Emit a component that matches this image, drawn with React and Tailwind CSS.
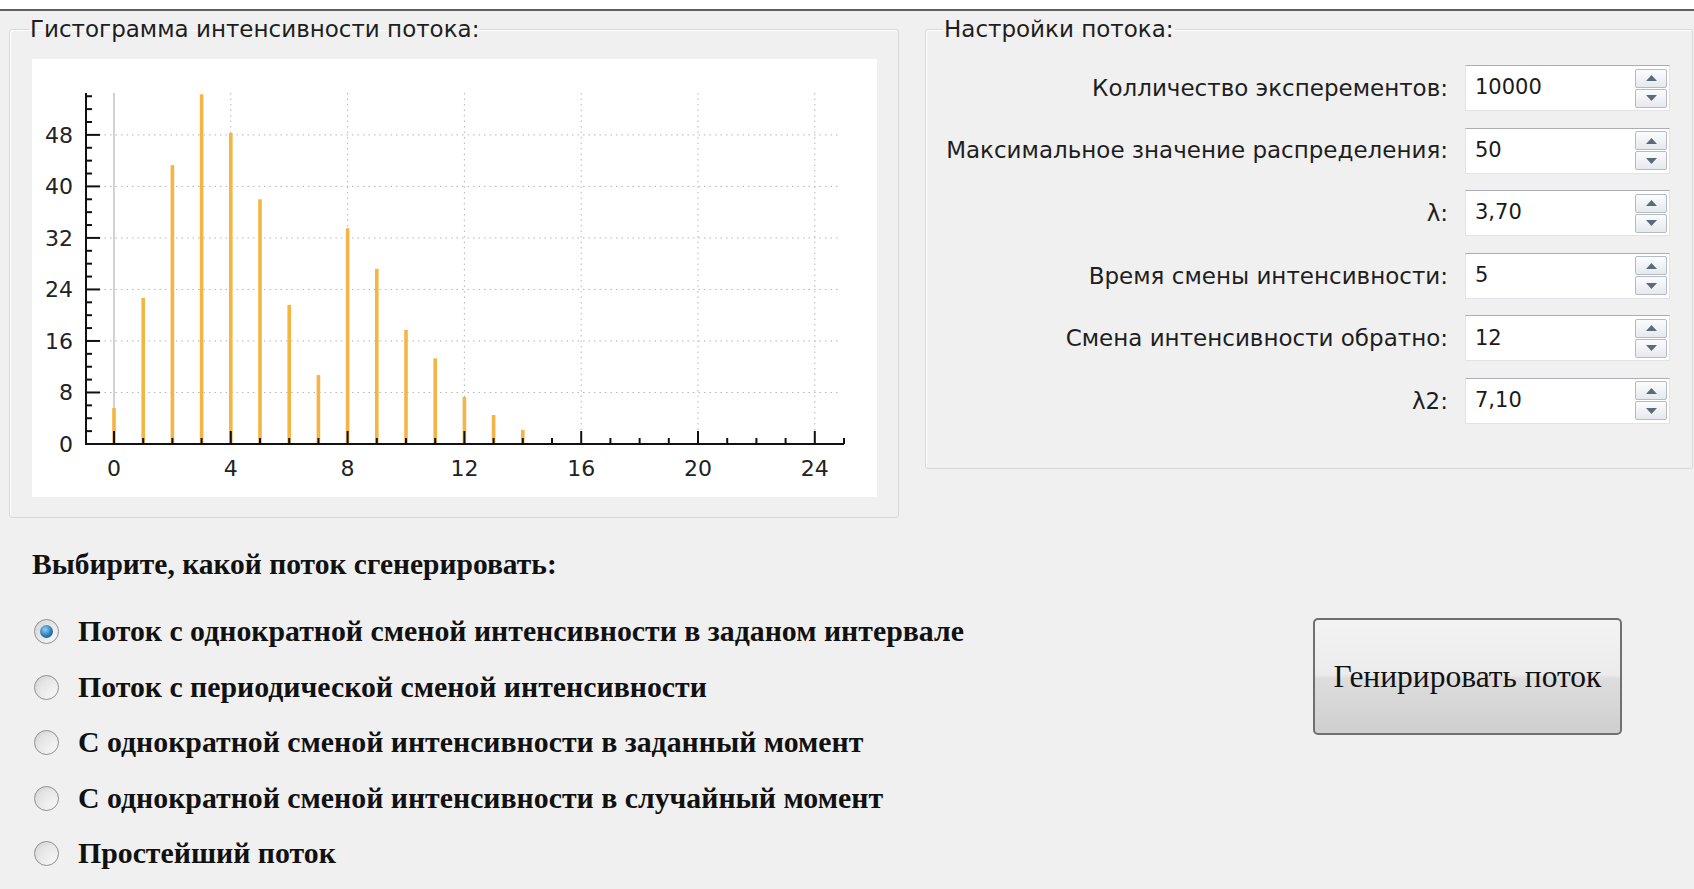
import React from 'react';

const uiFont = { fontFamily: '"DejaVu Sans", "Noto Sans", sans-serif' };
const serifFont = { fontFamily: '"Liberation Serif", "DejaVu Serif", serif' };

// histogram data: hits per interval length
const BARS = [5.6, 22.7, 43.3, 54.3, 48.3, 38, 21.6, 10.7, 33.5, 27.2, 17.7, 13.3, 7.3, 4.5, 2.2];
const X0 = 82;
const XU = 29.2;
const Y0 = 385;
const YU = 6.44;

const Histogram = () => {
  const yTicks = [];
  for (let v = 0; v <= 54; v += 2) yTicks.push(v);
  const xTicks = [];
  for (let i = 0; i <= 25; i++) xTicks.push(i);

  return (
    <svg width="845" height="438" viewBox="0 0 845 438" className="block bg-white">
      {/* grid */}
      {[8, 16, 24, 32, 40, 48].map((v) => (
        <line key={'h' + v} x1="56" x2="808" y1={Y0 - v * YU} y2={Y0 - v * YU} stroke="#b5b5b5" strokeWidth="1" strokeDasharray="1.5 4" />
      ))}
      {[4, 8, 12, 16, 20, 24].map((i) => (
        <line key={'v' + i} x1={X0 + i * XU} x2={X0 + i * XU} y1="34" y2={Y0} stroke="#b5b5b5" strokeWidth="1" strokeDasharray="1.5 4" />
      ))}
      <line x1={X0} x2={X0} y1="34" y2={Y0} stroke="#b4b4b4" strokeWidth="1.2" />

      {/* bars */}
      {BARS.map((v, i) => (
        <rect key={'b' + i} x={X0 + i * XU - 1.8} y={Y0 - v * YU} width="3.6" height={v * YU} fill="#f5b544" />
      ))}

      {/* axes */}
      <line x1="54" x2="54" y1="34" y2={Y0 + 1} stroke="#111" strokeWidth="2" />
      <line x1="53" x2="812" y1={Y0} y2={Y0} stroke="#111" strokeWidth="2" />
      {yTicks.map((v) => (
        <line key={'yt' + v} x1="54" x2={v % 8 === 0 ? 68 : 60} y1={Y0 - v * YU} y2={Y0 - v * YU} stroke="#111" strokeWidth="2" />
      ))}
      {xTicks.map((i) => (
        <line key={'xt' + i} x1={X0 + i * XU} x2={X0 + i * XU} y1={Y0} y2={i % 4 === 0 ? Y0 - 13 : Y0 - 6} stroke="#111" strokeWidth="2" />
      ))}

      {/* labels */}
      <g fontFamily='"DejaVu Sans", sans-serif' fontSize="22" fill="#222">
        {[0, 8, 16, 24, 32, 40, 48].map((v) => (
          <text key={'yl' + v} x="41" y={Y0 - v * YU + 8} textAnchor="end">{v}</text>
        ))}
        {[0, 4, 8, 12, 16, 20, 24].map((i) => (
          <text key={'xl' + i} x={X0 + i * XU} y="417" textAnchor="middle">{i}</text>
        ))}
      </g>
    </svg>
  );
};

const SpinArrow = ({ up }) => (
  <div className="flex h-[19px] w-[32px] items-center justify-center rounded-[2px] border border-[#b4bbc2] bg-[linear-gradient(to_bottom,#fbfcfd,#e6e9ed)]">
    <svg width="11" height="6" viewBox="0 0 11 6">
      {up ? <path d="M5.5 0 L11 6 L0 6 Z" fill="#5a6b7c" /> : <path d="M0 0 L11 0 L5.5 6 Z" fill="#5a6b7c" />}
    </svg>
  </div>
);

const SpinBox = ({ label, value }) => (
  <div className="flex h-[46px] items-center justify-end">
    <span className="mr-[17px] text-[23px] text-[#1e1e1e]" style={uiFont}>{label}</span>
    <div className="flex h-[46px] w-[205px] items-center border border-[#e2e3ea] border-t-[#abadb3] bg-white pl-[9px] pr-[2px]">
      <span className="flex-1 text-[21px] text-[#1a1a1a]" style={uiFont}>{value}</span>
      <div className="flex flex-col gap-[1px]">
        <SpinArrow up />
        <SpinArrow />
      </div>
    </div>
  </div>
);

const Radio = ({ checked, children }) => (
  <label className="flex h-[55.5px] items-center">
    <span className="ml-[34px] flex h-[25px] w-[25px] items-center justify-center rounded-full border border-[#8f8f8f] bg-[linear-gradient(to_bottom_right,#d4d4d4,#fbfbfb)]">
      {checked ? (
        <span className="h-[13px] w-[13px] rounded-full bg-[radial-gradient(circle_at_40%_35%,#8fd0f5,#2b7bb2_55%,#14466d)]" />
      ) : (
        <span className="h-[17px] w-[17px] rounded-full bg-[linear-gradient(to_bottom_right,#dedede,#f7f7f7)]" />
      )}
    </span>
    <span className="ml-[19px] text-[29.8px] font-bold text-[#111]" style={serifFont}>{children}</span>
  </label>
);

export default function App() {
  return (
    <div className="h-[889px] w-[1694px] overflow-hidden bg-[#f0f0f0]">
      <div className="h-[9px] bg-white" />
      <div className="h-[2px] bg-[#5b5f64]" />

      <div className="flex items-start">
        <fieldset className="ml-[9px] h-[507px] w-[890px] rounded-[3px] border border-[#d5d9dc] pb-[19px] pl-[22px] pr-[21px] pt-[12px] shadow-[inset_1px_1px_0_#fff]">
          <legend className="-ml-[3px] px-[1px] text-[23px] leading-[36px] text-[#1e1e1e]" style={uiFont}>
            Гистограмма интенсивности потока:
          </legend>
          <Histogram />
        </fieldset>

        <fieldset className="ml-[26px] h-[458px] w-[768px] rounded-[3px] border border-[#d5d9dc] pl-[17px] pr-[22px] pt-[18px] shadow-[inset_1px_1px_0_#fff]">
          <legend className="px-[1px] text-[23px] leading-[36px] text-[#1e1e1e]" style={uiFont}>
            Настройки потока:
          </legend>
          <div className="flex flex-col gap-[16.6px]">
            <SpinBox label="Колличество эксперементов:" value="10000" />
            <SpinBox label="Максимальное значение распределения:" value="50" />
            <SpinBox label="λ:" value="3,70" />
            <SpinBox label="Время смены интенсивности:" value="5" />
            <SpinBox label="Смена интенсивности обратно:" value="12" />
            <SpinBox label="λ2:" value="7,10" />
          </div>
        </fieldset>
      </div>

      <div className="flex">
        <div className="w-[1313px]">
          <div className="ml-[32px] mt-[28px] text-[29.5px] font-bold leading-[36px] text-[#111]" style={serifFont}>
            Выбирите, какой поток сгенерировать:
          </div>
          <div className="mt-[22px] flex flex-col">
            <Radio checked>Поток с однократной сменой интенсивности в заданом интервале</Radio>
            <Radio>Поток с периодической сменой интенсивности</Radio>
            <Radio>С однократной сменой интенсивности в заданный момент</Radio>
            <Radio>С однократной сменой интенсивности в случайный момент</Radio>
            <Radio>Простейший поток</Radio>
          </div>
        </div>
        <button className="mt-[100px] flex h-[117px] w-[309px] items-center justify-center rounded-[5px] border-2 border-[#707070] bg-[linear-gradient(to_bottom,#f3f3f3_0%,#ececec_48%,#dddddd_52%,#cfcfcf_100%)] text-[31.5px] text-[#111]" style={serifFont}>
          Генирировать поток
        </button>
      </div>
    </div>
  );
}
